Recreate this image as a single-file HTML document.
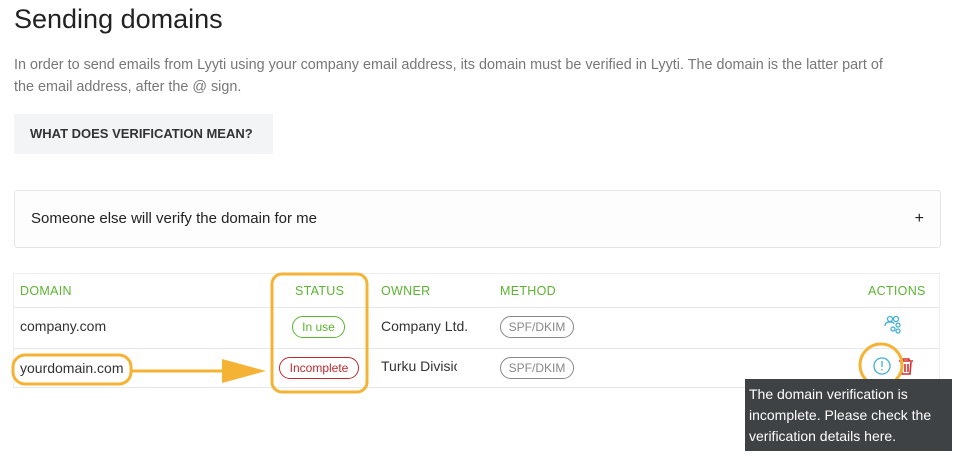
<!DOCTYPE html>
<html><head><style>
body{margin:0;width:954px;height:467px;background:#fff;font-family:"Liberation Sans",sans-serif;position:relative;overflow:hidden;color:#333}
.a{position:absolute;white-space:nowrap}
h1{position:absolute;left:14px;top:4px;margin:0;font-weight:normal;font-size:27px;color:#222}
.p{left:14px;top:54px;font-size:14.4px;color:#777;line-height:22px;white-space:normal;width:915px}
.btn{left:14px;top:114px;width:259px;height:40px;background:#f3f4f5;border-radius:2px;font-size:13px;font-weight:bold;color:#333;line-height:40px;text-indent:16px}
.acc{left:14px;top:190px;width:925px;height:56px;border:1px solid #e5e5e5;border-radius:3px;background:#fdfdfd;font-size:15px;color:#222;line-height:56px;text-indent:16px}
.tb{left:13px;top:273px;width:925px;height:114px;border:1px solid #eee;border-bottom:none}
.ln{position:absolute;left:13px;width:926px;height:1px;background:#e8e8e8}
.h{font-size:12.5px;color:#5cb431;top:284px;letter-spacing:.3px}
.c{font-size:14px;color:#333}
.pill{position:absolute;border-radius:12px;font-size:12px;text-align:center;height:20px;line-height:21px}
</style></head><body>
<h1>Sending domains</h1>
<div class="a p">In order to send emails from Lyyti using your company email address, its domain must be verified in Lyyti. The domain is the latter part of<br>the email address, after the @ sign.</div>
<div class="a btn">WHAT DOES VERIFICATION MEAN?</div>
<div class="a acc">Someone else will verify the domain for me<span style="position:absolute;right:16px;text-indent:0;font-size:16px">+</span></div>
<div class="a tb"></div>
<div class="ln" style="top:307px"></div><div class="ln" style="top:348px"></div><div class="ln" style="top:387px"></div>
<div class="a h" style="left:20px">DOMAIN</div>
<div class="a h" style="left:295px">STATUS</div>
<div class="a h" style="left:381px">OWNER</div>
<div class="a h" style="left:500px">METHOD</div>
<div class="a h" style="left:868px">ACTIONS</div>
<div class="a c" style="left:20px;top:318px">company.com</div>
<div class="a c" style="left:20px;top:360px">yourdomain.com</div>
<div class="a c" style="left:381px;top:318px">Company Ltd.</div>
<div class="a c" style="left:381px;top:358px;width:76px;overflow:hidden">Turku Division</div>
<div class="pill" style="left:292px;top:316px;width:51px;border:1px solid #5cb431;color:#5cb431">In use</div>
<div class="pill" style="left:279px;top:357px;width:78px;border:1px solid #c0282d;color:#c0282d">Incomplete</div>
<div class="pill" style="left:500px;top:316px;width:72px;border:1px solid #888;color:#888">SPF/DKIM</div>
<div class="pill" style="left:500px;top:357px;width:72px;border:1px solid #888;color:#888">SPF/DKIM</div>
<svg class="a" style="left:0;top:0" width="954" height="467">
<g fill="none" stroke="#3fb0d6" stroke-width="1.3">
<circle cx="890" cy="319" r="2.5"/><path d="M885 326c0-3 2-4 5-4s4 1 4 2"/>
<circle cx="896" cy="319" r="2.5"/><circle cx="898" cy="325" r="2"/><circle cx="893" cy="329" r="2"/><circle cx="898" cy="331" r="2"/>
<circle cx="882" cy="366" r="8"/><path d="M882 361v6M882 369v1.5"/>
</g>
<g fill="none" stroke="#d2302f" stroke-width="1.6"><path d="M899 361h14M903 361v-2h6v2M901 362l1 12h8l1-12M905 364v8M908 364v8"/></g>
<g fill="none" stroke="#f5b335" stroke-width="3">
<rect x="272" y="274" width="95" height="118" rx="10"/>
<rect x="13" y="355" width="118" height="29" rx="12"/>
<circle cx="881" cy="365" r="21"/>
<path d="M132 371H230"/></g>
<path d="M222 359L266 371L222 383Z" fill="#f5b335"/>
</svg>
<div class="a" style="left:745px;top:379px;width:207px;height:72px;background:#3f4244;color:#fff;font-size:14px;line-height:21px;padding:5px 0 0 4px;box-sizing:border-box;white-space:normal">The domain verification is incomplete. Please check the verification details here.</div>
</body></html>
